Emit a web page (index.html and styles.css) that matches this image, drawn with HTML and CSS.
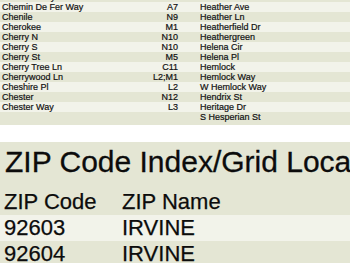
FILE: index.html
```html
<!DOCTYPE html>
<html>
<head>
<meta charset="utf-8">
<link rel="stylesheet" href="styles.css">
</head>
<body>
<section class="streets">
  <div class="cols">
    <div class="list left">
      <div class="row"><span class="name">Chelsea Way</span><span class="code">K4</span></div>
      <div class="row"><span class="name">Chemin De Fer Way</span><span class="code">A7</span></div>
      <div class="row"><span class="name">Chenile</span><span class="code">N9</span></div>
      <div class="row"><span class="name">Cherokee</span><span class="code">M1</span></div>
      <div class="row"><span class="name">Cherry N</span><span class="code">N10</span></div>
      <div class="row"><span class="name">Cherry S</span><span class="code">N10</span></div>
      <div class="row"><span class="name">Cherry St</span><span class="code">M5</span></div>
      <div class="row"><span class="name">Cherry Tree Ln</span><span class="code">C11</span></div>
      <div class="row"><span class="name">Cherrywood Ln</span><span class="code">L2;M1</span></div>
      <div class="row"><span class="name">Cheshire Pl</span><span class="code">L2</span></div>
      <div class="row"><span class="name">Chester</span><span class="code">N12</span></div>
      <div class="row"><span class="name">Chester Way</span><span class="code">L3</span></div>
      <div class="row"><span class="name"></span><span class="code"></span></div>
    </div>
    <div class="list right">
      <div class="row"><span class="name"></span></div>
      <div class="row"><span class="name">Heather Ave</span></div>
      <div class="row"><span class="name">Heather Ln</span></div>
      <div class="row"><span class="name">Heatherfield Dr</span></div>
      <div class="row"><span class="name">Heathergreen</span></div>
      <div class="row"><span class="name">Helena Cir</span></div>
      <div class="row"><span class="name">Helena Pl</span></div>
      <div class="row"><span class="name">Hemlock</span></div>
      <div class="row"><span class="name">Hemlock Way</span></div>
      <div class="row"><span class="name">W Hemlock Way</span></div>
      <div class="row"><span class="name">Hendrix St</span></div>
      <div class="row"><span class="name">Heritage Dr</span></div>
      <div class="row"><span class="name">S Hesperian St</span></div>
    </div>
  </div>
</section>
<section class="zip">
  <h1 class="zip-title">ZIP Code Index/Grid Location</h1>
  <div class="zip-table">
    <div class="zrow head"><span class="zcode">ZIP Code</span><span class="zname">ZIP Name</span></div>
    <div class="zrow odd"><span class="zcode">92603</span><span class="zname">IRVINE</span></div>
    <div class="zrow"><span class="zcode">92604</span><span class="zname">IRVINE</span></div>
  </div>
</section>
</body>
</html>
```

FILE: styles.css
```css
html, body {
  margin: 0;
  padding: 0;
  background: #ffffff;
  width: 350px;
  height: 263px;
  overflow: hidden;
  font-family: "Liberation Sans", Arial, Helvetica, sans-serif;
  color: #111;
}

.streets {
  height: 125px;
  background: #e4e6d4;
  overflow: hidden;
}

.cols {
  display: flex;
  margin-top: -8.5px;
}

.list {
  display: flex;
  flex-direction: column;
}

.left {
  width: 180px;
}

.right {
  flex: 1;
}

.row {
  display: flex;
  justify-content: space-between;
  height: 10px;
  line-height: 10px;
  font-size: 9px;
  white-space: nowrap;
  padding: 0 2px;
  -webkit-text-stroke: 0.2px #111;
}

.right .row {
  padding-left: 20px;
}

.row:nth-child(even) {
  background: #f2f3ea;
}

.zip {
  margin-top: 17px;
  background: #e4e6d4;
  height: 121px;
  overflow: hidden;
  padding-top: 3px;
}

.zip-title {
  margin: 0 0 10px 0;
  padding-left: 5px;
  font-size: 30px;
  line-height: 34px;
  font-weight: normal;
  white-space: nowrap;
  color: #0c0c0c;
  -webkit-text-stroke: 0.3px #0c0c0c;
}

.zip-table {
  display: flex;
  flex-direction: column;
}

.zrow {
  display: flex;
  height: 26px;
  line-height: 26px;
  font-size: 22px;
  padding-left: 4px;
  color: #0c0c0c;
  -webkit-text-stroke: 0.25px #0c0c0c;
}

.zrow.odd {
  background: #f2f3ea;
}

.zcode {
  width: 118px;
}
```
